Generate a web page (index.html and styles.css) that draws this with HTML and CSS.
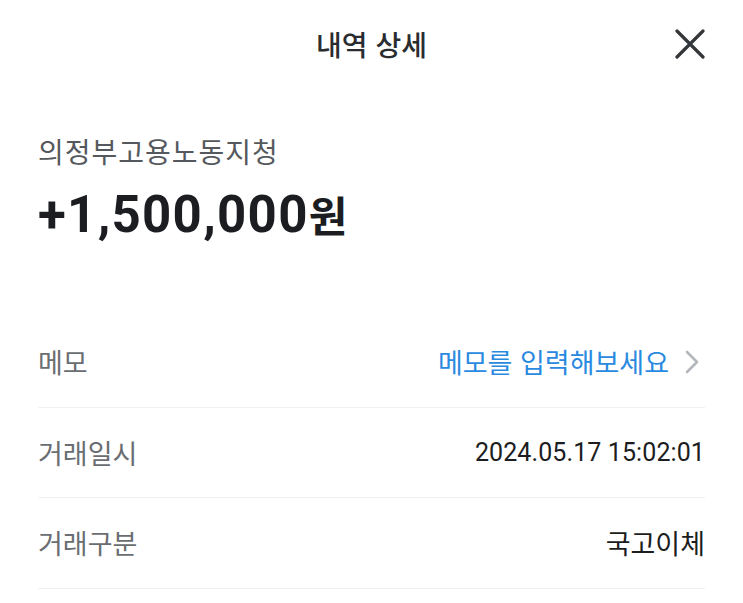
FILE: index.html
```html
<!DOCTYPE html>
<html lang="ko">
<head>
<meta charset="utf-8">
<link rel="stylesheet" href="styles.css">
</head>
<body>
<div class="page">
  <header class="topbar">
    <span></span>
    <h1 class="title">내역 상세</h1>
    <button class="close" aria-label="닫기">
      <svg width="30" height="30" viewBox="0 0 30 30"><path d="M2 2 L28 28 M28 2 L2 28" stroke="#33363b" stroke-width="3.2" stroke-linecap="round" fill="none"/></svg>
    </button>
  </header>
  <section class="summary">
    <div class="payer">의정부고용노동지청</div>
    <div class="amount"><span class="num">+1,500,000</span>원</div>
  </section>
  <ul class="rows">
    <li class="row">
      <span class="label">메모</span>
      <span class="value link">메모를 입력해보세요
        <svg class="chev" width="14" height="24" viewBox="0 0 14 24"><path d="M2 2 L12 12 L2 22" stroke="#b4b7bb" stroke-width="2.6" fill="none" stroke-linecap="round" stroke-linejoin="round"/></svg>
      </span>
    </li>
    <li class="row">
      <span class="label">거래일시</span>
      <span class="value date">2024.05.17 15:02:01</span>
    </li>
    <li class="row">
      <span class="label">거래구분</span>
      <span class="value">국고이체</span>
    </li>
  </ul>
</div>
</body>
</html>
```

FILE: styles.css
```css
* { box-sizing: border-box; }
html, body { margin: 0; padding: 0; background: #fff; }
body {
  font-family: "Noto Sans CJK KR", "Noto Sans", sans-serif;
  color: #1b1d21;
}
.page { padding: 0 38px; }
.topbar {
  height: 88px;
  display: grid;
  grid-template-columns: 1fr auto 1fr;
  align-items: center;
}
.title {
  margin: 0;
  font-size: 28px;
  font-weight: 500;
  color: #2a2c30;
  letter-spacing: 0;
}
.close {
  justify-self: end;
  border: 0;
  background: none;
  padding: 0;
  width: 30px;
  height: 30px;
  display: flex;
}
.summary { padding-top: 45px; }
.payer {
  font-size: 28px;
  line-height: 36px;
  color: #55585c;
  letter-spacing: 1px;
}
.amount {
  margin-top: 17px;
  font-size: 42px;
  line-height: 56px;
  font-weight: 700;
  color: #1b1d21;
}
.amount .num {
  font-family: Roboto, "Noto Sans", sans-serif;
  font-size: 51px;
  letter-spacing: 1.3px;
}
.rows {
  list-style: none;
  margin: 74px 0 0;
  padding: 0;
}
.row {
  height: 90.5px;
  display: flex;
  align-items: center;
  justify-content: space-between;
  border-bottom: 1px solid #eef0f2;
  font-size: 27px;
}
.label { color: #6a6d71; letter-spacing: 0; }
.value { color: #1b1d21; letter-spacing: 0; }
.link {
  color: #2a8ae0;
  display: flex;
  align-items: center;
  gap: 16px;
}
.chev { margin-right: 6px; }
.date {
  font-family: Roboto, "Noto Sans", sans-serif;
  font-size: 25px;
  letter-spacing: 0.1px;
}
```
